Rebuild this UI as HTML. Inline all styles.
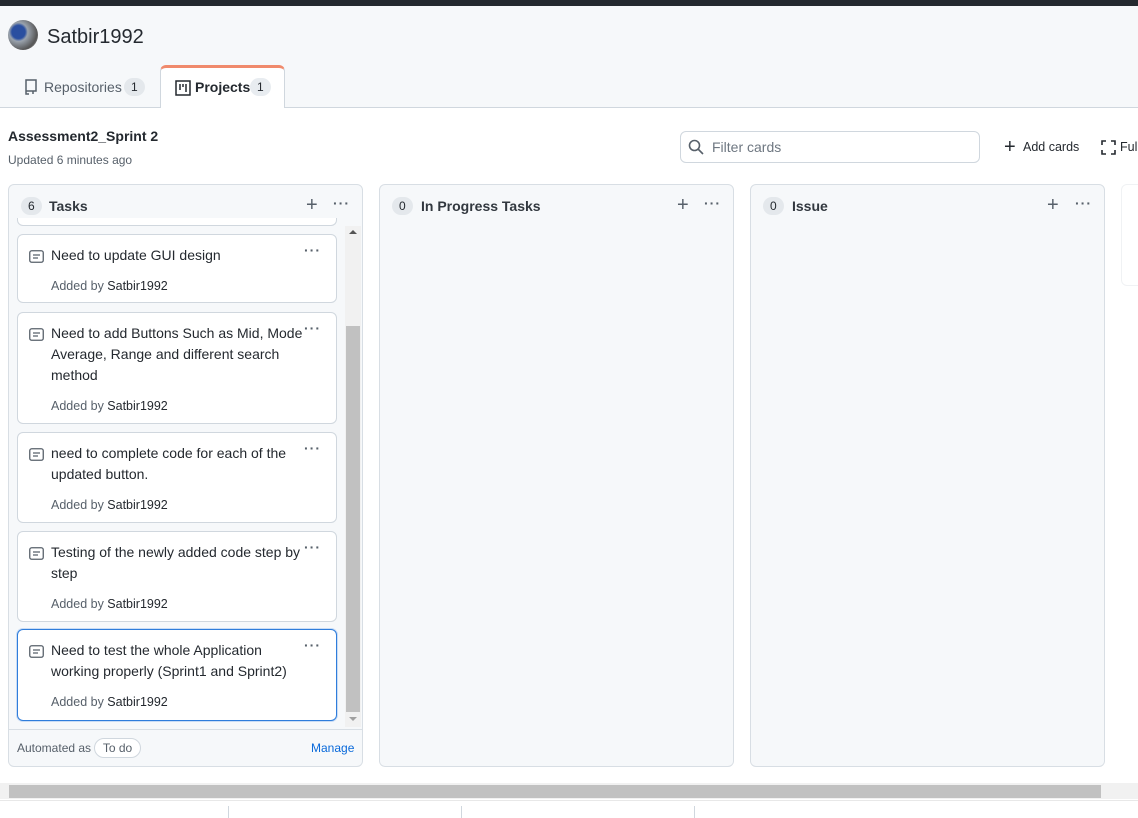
<!DOCTYPE html>
<html><head><meta charset="utf-8"><style>
*{box-sizing:border-box;margin:0;padding:0}
body{width:1138px;height:818px;overflow:hidden;background:#fff;font-family:"Liberation Sans",sans-serif;color:#24292f;position:relative}
.abs{position:absolute}
.top{left:0;top:0;width:1138px;height:6px;background:#24292f}
.hdr{left:0;top:6px;width:1138px;height:102px;background:#f6f8fa;border-bottom:1px solid #d0d7de}
.col{background:#f6f8fa;border:1px solid #d8dee4;border-radius:6px}
.cnt{display:inline-block;background:#e4e8ec;border-radius:10px;font-size:12px;padding:2px 7px}
.card{left:17px;width:320px;background:#fff;border:1px solid #d0d7de;border-radius:6px}
.card .t{position:absolute;left:33px;top:10px;width:260px;font-size:14px;line-height:21px}
.card .a{position:absolute;left:33px;font-size:12.5px;color:#57606a}
.card .a b{font-weight:normal;color:#24292f}
.card svg{position:absolute;left:11px;top:15px}
.dots{position:absolute;font-size:14px;letter-spacing:1px;color:#57606a;font-weight:bold}
.plus{position:absolute;font-size:20px;color:#57606a;line-height:1}
.h{font-size:14px;font-weight:bold;color:#32383f}
</style></head><body>
<div class="abs top"></div>
<div class="abs hdr"></div>
<div class="abs" style="left:8px;top:20px;width:30px;height:30px;border-radius:50%;background:radial-gradient(circle at 35% 40%,#2a4fa0 0 25%,#9aa3ad 35%,#555 70%,#ccc)"></div>
<div class="abs" style="left:47px;top:26px;font-size:20px">Satbir1992</div>
<svg class="abs" style="left:24px;top:79px" width="14" height="17"><path d="M2 1h10v11H2zM2 12v3h3M9 12v3" fill="none" stroke="#57606a" stroke-width="1.5"/></svg>
<div class="abs" style="left:44px;top:79px;font-size:14px;color:#57606a">Repositories</div>
<div class="abs cnt" style="left:124px;top:78px;font-size:12px">1</div>
<div class="abs" style="left:160px;top:65px;width:125px;height:43px;background:#fff;border:1px solid #d0d7de;border-bottom:none;border-top:3px solid #f08a6c;border-radius:6px 6px 0 0"></div>
<svg class="abs" style="left:175px;top:80px" width="16" height="16"><path d="M1 1h14v14H1zM5 4v6M8 4v3M11 4v8" fill="none" stroke="#24292f" stroke-width="1.5"/></svg>
<div class="abs" style="left:195px;top:79px;font-size:14px;font-weight:bold">Projects</div>
<div class="abs cnt" style="left:250px;top:78px;background:#e8ecf0">1</div>
<div class="abs" style="left:8px;top:128px;font-size:14px;font-weight:bold">Assessment2_Sprint 2</div>
<div class="abs" style="left:8px;top:153px;font-size:12px;color:#57606a">Updated 6 minutes ago</div>
<div class="abs" style="left:680px;top:131px;width:300px;height:32px;border:1px solid #d0d7de;border-radius:6px;background:#fff"></div>
<svg class="abs" style="left:688px;top:139px" width="16" height="16"><circle cx="6.5" cy="6.5" r="5" fill="none" stroke="#57606a" stroke-width="1.6"/><line x1="10" y1="10" x2="15" y2="15" stroke="#57606a" stroke-width="1.6"/></svg>
<div class="abs" style="left:712px;top:139px;font-size:14px;color:#6e7781">Filter cards</div>
<div class="plus" style="left:1004px;top:137px;color:#24292f">+</div>
<div class="abs" style="left:1023px;top:140px;font-size:12.5px">Add cards</div>
<svg class="abs" style="left:1101px;top:140px" width="15" height="15"><path d="M1 5V1h4M10 1h4v4M14 10v4h-4M5 14H1v-4" fill="none" stroke="#24292f" stroke-width="1.6"/></svg>
<div class="abs" style="left:1120px;top:140px;font-size:12.5px">Full</div>

<div class="abs col" style="left:8px;top:184px;width:355px;height:583px"></div>
<div class="abs col" style="left:379px;top:184px;width:355px;height:583px"></div>
<div class="abs col" style="left:750px;top:184px;width:355px;height:583px"></div>
<div class="abs" style="left:1121px;top:184px;width:30px;height:102px;border:1px solid #f0f2f4;border-radius:6px"></div>

<div class="abs cnt" style="left:21px;top:197px">6</div><div class="abs h" style="left:49px;top:198px">Tasks</div>
<div class="plus" style="left:306px;top:195px">+</div><div class="dots" style="left:333px;top:195px">···</div>
<div class="abs cnt" style="left:392px;top:197px">0</div><div class="abs h" style="left:421px;top:198px">In Progress Tasks</div>
<div class="plus" style="left:677px;top:195px">+</div><div class="dots" style="left:704px;top:195px">···</div>
<div class="abs cnt" style="left:763px;top:197px">0</div><div class="abs h" style="left:792px;top:198px">Issue</div>
<div class="plus" style="left:1047px;top:195px">+</div><div class="dots" style="left:1075px;top:195px">···</div>

<div class="abs" style="left:17px;top:218px;width:320px;height:8px;background:#fff;border:1px solid #d0d7de;border-top:none;border-radius:0 0 6px 6px"></div>
<div class="abs" style="left:345px;top:226px;width:16px;height:501px;background:#f1f1f1"></div>
<div class="abs" style="left:346px;top:326px;width:14px;height:386px;background:#c1c1c1"></div>
<div class="abs" style="left:349px;top:230px;border:4px solid transparent;border-bottom:4px solid #555;border-top:none"></div>
<div class="abs" style="left:349px;top:717px;border:4px solid transparent;border-top:4px solid #a0a0a0;border-bottom:none"></div>

<div class="abs card" style="top:234px;height:69px"><svg width="15" height="13"><rect x="0.75" y="0.75" width="13.5" height="11.5" rx="2" fill="none" stroke="#57606a" stroke-width="1.3"/><path d="M4 5h7M4 8h5" stroke="#57606a" stroke-width="1.3"/></svg><div class="t">Need to update GUI design</div><div class="dots" style="left:286px;top:7px">···</div><div class="a" style="top:44px">Added by <b>Satbir1992</b></div></div>
<div class="abs card" style="top:312px;height:112px"><svg width="15" height="13"><rect x="0.75" y="0.75" width="13.5" height="11.5" rx="2" fill="none" stroke="#57606a" stroke-width="1.3"/><path d="M4 5h7M4 8h5" stroke="#57606a" stroke-width="1.3"/></svg><div class="t">Need to add Buttons Such as Mid, Mode Average, Range and different search method</div><div class="dots" style="left:286px;top:7px">···</div><div class="a" style="top:86px">Added by <b>Satbir1992</b></div></div>
<div class="abs card" style="top:432px;height:91px"><svg width="15" height="13"><rect x="0.75" y="0.75" width="13.5" height="11.5" rx="2" fill="none" stroke="#57606a" stroke-width="1.3"/><path d="M4 5h7M4 8h5" stroke="#57606a" stroke-width="1.3"/></svg><div class="t">need to complete code for each of the updated button.</div><div class="dots" style="left:286px;top:7px">···</div><div class="a" style="top:65px">Added by <b>Satbir1992</b></div></div>
<div class="abs card" style="top:531px;height:91px"><svg width="15" height="13"><rect x="0.75" y="0.75" width="13.5" height="11.5" rx="2" fill="none" stroke="#57606a" stroke-width="1.3"/><path d="M4 5h7M4 8h5" stroke="#57606a" stroke-width="1.3"/></svg><div class="t">Testing of the newly added code step by step</div><div class="dots" style="left:286px;top:7px">···</div><div class="a" style="top:65px">Added by <b>Satbir1992</b></div></div>
<div class="abs card" style="top:629px;height:92px;border:1.5px solid #2f7ddb;box-shadow:0 0 0 1px #c9dcf5"><svg width="15" height="13"><rect x="0.75" y="0.75" width="13.5" height="11.5" rx="2" fill="none" stroke="#57606a" stroke-width="1.3"/><path d="M4 5h7M4 8h5" stroke="#57606a" stroke-width="1.3"/></svg><div class="t">Need to test the whole Application working properly (Sprint1 and Sprint2)</div><div class="dots" style="left:286px;top:7px">···</div><div class="a" style="top:65px">Added by <b>Satbir1992</b></div></div>

<div class="abs" style="left:9px;top:729px;width:353px;height:1px;background:#d8dee4"></div>
<div class="abs" style="left:17px;top:741px;font-size:12px;color:#57606a">Automated as</div>
<div class="abs" style="left:94px;top:738px;width:47px;height:20px;border:1px solid #d0d7de;border-radius:10px;background:#fff;font-size:12px;text-align:center;line-height:18px;color:#57606a">To do</div>
<div class="abs" style="left:311px;top:741px;font-size:12px;color:#0969da">Manage</div>

<div class="abs" style="left:0;top:783px;width:1138px;height:16px;background:#f1f1f1"></div>
<div class="abs" style="left:9px;top:785px;width:1092px;height:13px;background:#c1c1c1"></div>
<div class="abs" style="left:0;top:800px;width:1138px;height:1px;background:#e8e8e8"></div>
<div class="abs" style="left:228px;top:806px;width:1px;height:12px;background:#d0d7de"></div>
<div class="abs" style="left:461px;top:806px;width:1px;height:12px;background:#d0d7de"></div>
<div class="abs" style="left:694px;top:806px;width:1px;height:12px;background:#d0d7de"></div>
</body></html>
